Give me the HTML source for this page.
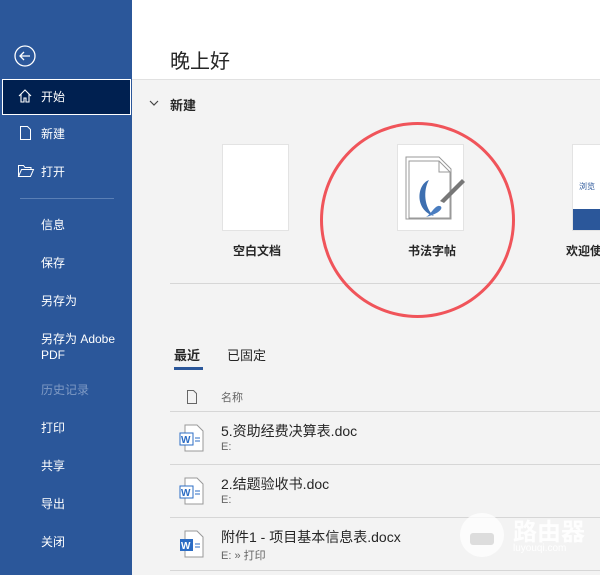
<!DOCTYPE html>
<html><head><meta charset="utf-8"><style>
*{margin:0;padding:0;box-sizing:border-box}
body{width:600px;height:575px;overflow:hidden;position:relative;background:#f3f3f3;font-family:"Liberation Sans","Noto Sans CJK SC",sans-serif;color:#262626;white-space:nowrap}
.sb{position:absolute;left:0;top:0;width:132px;height:575px;background:#2b579a;color:#fff}
.sb div.it{position:absolute;left:41px;font-size:12px;line-height:16px}
.a{position:absolute}
.top{position:absolute;left:132px;top:0;width:468px;height:80px;background:#fff;border-bottom:1px solid #e1e1e1}
.t{position:absolute;font-size:12px}
.line{position:absolute;height:1px;background:#d6d6d6}
</style></head><body>
<div class="top"></div>
<div class="sb">
<svg class="a" style="left:14px;top:45px" width="22" height="22" viewBox="0 0 22 22"><circle cx="11" cy="11" r="10" fill="none" stroke="#fff" stroke-width="1.3"/><path d="M6 11h10M10 7l-4 4 4 4" fill="none" stroke="#fff" stroke-width="1.3"/></svg>
<div class="a" style="left:2px;top:79px;width:129px;height:36px;background:#002050;border:1px solid #fff"></div>
<svg class="a" style="left:17px;top:88px" width="16" height="16" viewBox="0 0 16 16"><path d="M2 8l6-6 6 6M4 6v8h3v-4h2v4h3V6" fill="none" stroke="#fff" stroke-width="1.1"/></svg>
<div class="it" style="top:89px">开始</div>
<svg class="a" style="left:19px;top:125px" width="14" height="16" viewBox="0 0 14 16"><path d="M1.5 1.5h7l3 3v10h-10z" fill="none" stroke="#fff" stroke-width="1"/></svg>
<div class="it" style="top:126px">新建</div>
<svg class="a" style="left:17px;top:164px" width="18" height="14" viewBox="0 0 18 14"><path d="M1.5 12.5v-11h5l1.5 2h6v2M1.5 12.5l3-7h12l-3 7z" fill="none" stroke="#fff" stroke-width="1"/></svg>
<div class="it" style="top:164px">打开</div>
<div class="a" style="left:20px;top:198px;width:94px;height:1px;background:#5a7fb5"></div>
<div class="it" style="top:217px">信息</div>
<div class="it" style="top:255px">保存</div>
<div class="it" style="top:293px">另存为</div>
<div class="it" style="top:331px">另存为 Adobe<br>PDF</div>
<div class="it" style="top:382px;color:#7f9ac4">历史记录</div>
<div class="it" style="top:420px">打印</div>
<div class="it" style="top:458px">共享</div>
<div class="it" style="top:496px">导出</div>
<div class="it" style="top:534px">关闭</div>
</div>
<div class="t" style="left:170px;top:45px;font-size:20px">晚上好</div>
<svg class="a" style="left:149px;top:99px" width="10" height="8" viewBox="0 0 10 8"><path d="M1 2l4 4 4-4" fill="none" stroke="#444" stroke-width="1.2"/></svg>
<div class="t" style="left:170px;top:95px;font-size:13px;font-weight:bold">新建</div>
<div class="a" style="left:222px;top:144px;width:67px;height:87px;background:#fff;border:1px solid #e3e3e3"></div>
<div class="t" style="left:233px;top:242px;font-weight:bold">空白文档</div>
<div class="a" style="left:397px;top:144px;width:67px;height:87px;background:#fff;border:1px solid #e3e3e3"></div>
<svg class="a" style="left:404px;top:155px" width="62" height="66" viewBox="0 0 62 66"><path d="M2 2h33l12 12v50H2z" fill="#fff" stroke="#999"/><path d="M5 6h30l11 11v46H5z" fill="#fff" stroke="#999"/><path d="M35 6v11h11" fill="none" stroke="#999"/><path d="M25 25c-12 4-15 30 5 36c-10-8-11-26-5-36z" fill="#3d6fb0"/><path d="M22 62c5-3 8-10 12-11 5-1 7 6-12 11z" fill="#4a7dc0"/><path d="M36 46l22-22 3 3-21 21z" fill="#777"/></svg>
<div class="t" style="left:408px;top:242px;font-weight:bold">书法字帖</div>
<div class="a" style="left:572px;top:144px;width:40px;height:87px;background:#fff;border:1px solid #e3e3e3"></div>
<div class="a" style="left:573px;top:209px;width:40px;height:21px;background:#2b579a"></div>
<div class="t" style="left:579px;top:181px;font-size:8px;color:#2b579a">浏览</div>
<div class="t" style="left:566px;top:242px;font-weight:bold">欢迎使</div>
<div class="line" style="left:170px;top:283px;width:430px"></div>
<div class="a" style="left:320px;top:122px;width:195px;height:196px;border:3px solid #f0545a;border-radius:50%"></div>
<div class="t" style="left:174px;top:345px;font-size:13px;font-weight:bold">最近</div>
<div class="a" style="left:174px;top:367px;width:29px;height:3px;background:#2b579a"></div>
<div class="t" style="left:227px;top:345px;font-size:13px">已固定</div>
<svg class="a" style="left:186px;top:389px" width="12" height="16" viewBox="0 0 12 16"><path d="M1.5 1.5h6l3 3v10h-9z" fill="none" stroke="#666"/></svg>
<div class="t" style="left:221px;top:389px;font-size:11px;color:#666">名称</div>
<div class="line" style="left:170px;top:411px;width:430px"></div>
<div class="line" style="left:170px;top:464px;width:430px"></div>
<div class="line" style="left:170px;top:517px;width:430px"></div>
<div class="line" style="left:170px;top:570px;width:430px"></div>
<svg class="a" style="left:179px;top:424px" width="26" height="28" viewBox="0 0 26 28"><path d="M6 1h12l6 6v20H6z" fill="#fff" stroke="#999"/><rect x="1" y="9" width="13" height="12" fill="#fff" stroke="#2b6cc4"/><text x="2" y="19" font-size="10" fill="#2b6cc4" font-weight="bold" font-family="Liberation Sans">W</text><path d="M16 14h5M16 17h5" stroke="#2b6cc4"/></svg>
<div class="t" style="left:221px;top:421px;font-size:14px">5.资助经费决算表.doc</div>
<div class="t" style="left:221px;top:441px;font-size:11px;color:#666">E:</div>
<svg class="a" style="left:179px;top:477px" width="26" height="28" viewBox="0 0 26 28"><path d="M6 1h12l6 6v20H6z" fill="#fff" stroke="#999"/><rect x="1" y="9" width="13" height="12" fill="#fff" stroke="#2b6cc4"/><text x="2" y="19" font-size="10" fill="#2b6cc4" font-weight="bold" font-family="Liberation Sans">W</text><path d="M16 14h5M16 17h5" stroke="#2b6cc4"/></svg>
<div class="t" style="left:221px;top:474px;font-size:14px">2.结题验收书.doc</div>
<div class="t" style="left:221px;top:494px;font-size:11px;color:#666">E:</div>
<svg class="a" style="left:179px;top:530px" width="26" height="28" viewBox="0 0 26 28"><path d="M6 1h12l6 6v20H6z" fill="#fff" stroke="#999"/><rect x="1" y="9" width="13" height="12" fill="#2b6cc4"/><text x="2" y="19" font-size="10" fill="#fff" font-weight="bold" font-family="Liberation Sans">W</text><path d="M16 14h5M16 17h5" stroke="#2b6cc4"/></svg>
<div class="t" style="left:221px;top:527px;font-size:14px">附件1 - 项目基本信息表.docx</div>
<div class="t" style="left:221px;top:547px;font-size:11px;color:#666">E: » 打印</div>
<div class="a" style="left:460px;top:513px;width:44px;height:44px;border-radius:50%;background:rgba(255,255,255,.75)"></div>
<div class="a" style="left:470px;top:533px;width:24px;height:12px;border-radius:3px;background:rgba(200,200,200,.6)"></div>
<div class="t" style="left:513px;top:512px;font-size:24px;color:rgba(255,255,255,.85);font-weight:bold">路由器</div>
<div class="t" style="left:513px;top:543px;font-size:10px;color:rgba(255,255,255,.95)">luyouqi.com</div>
</body></html>
